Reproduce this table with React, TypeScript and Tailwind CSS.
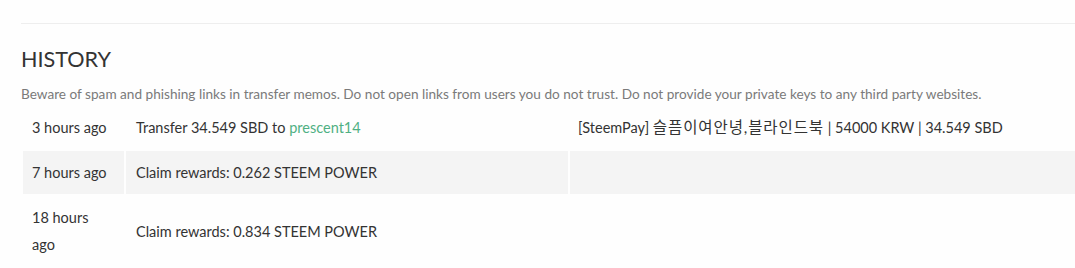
const rows = [
  {
    when: "3 hours ago",
    what: (
      <>
        Transfer 34.549 SBD to <a className="text-[#4fb083]">prescent14</a>
      </>
    ),
    memo: (
      <>
        [SteemPay] <span className="text-[15.5px] leading-[20px] tracking-[0.9px]">슬픔이여안녕,블라인드북</span> | 54000 KRW | 34.549 SBD
      </>
    ),
  },
  { when: "7 hours ago", what: "Claim rewards: 0.262 STEEM POWER", memo: null },
  { when: "18 hours ago", what: "Claim rewards: 0.834 STEEM POWER", memo: null },
];

export default function App() {
  return (
    <div className="min-h-[268px] w-[1075px] overflow-hidden bg-[#fefefe] font-['Lato','Noto_Sans_CJK_KR',sans-serif] text-[#333]">
      <div className="pl-[21px] pt-[23px]">
        <div className="border-t border-[#eeeeee]" />
        <h4 className="mt-[20px] text-[21.6px] leading-[30px] text-[#333]">HISTORY</h4>
        <p className="mt-[11px] text-[13.62px] leading-[18px] text-[#7a7a7a]">
          Beware of spam and phishing links in transfer memos. Do not open links from users you do not trust. Do not
          provide your private keys to any third party websites.
        </p>
        <table className="mt-[1px] w-[1100px] table-fixed border-separate border-spacing-[2px] text-[14.5px] leading-[27px]">
          <colgroup>
            <col className="w-[101px]" />
            <col className="w-[442px]" />
            <col />
          </colgroup>
          <tbody>
            {rows.map((r, i) => (
              <tr key={i} className={i % 2 === 1 ? "bg-[#f4f4f4]" : "bg-[#fefefe]"}>
                <td className="py-[8px] pl-[9px] pr-[12px] align-middle">{r.when}</td>
                <td className="py-[8px] pl-[10px] pr-[8px] align-middle">{r.what}</td>
                <td className="py-[8px] pl-[8px] align-middle whitespace-nowrap">{r.memo}</td>
              </tr>
            ))}
          </tbody>
        </table>
        <div className="border-t border-[#eeeeee]" />
      </div>
    </div>
  );
}
